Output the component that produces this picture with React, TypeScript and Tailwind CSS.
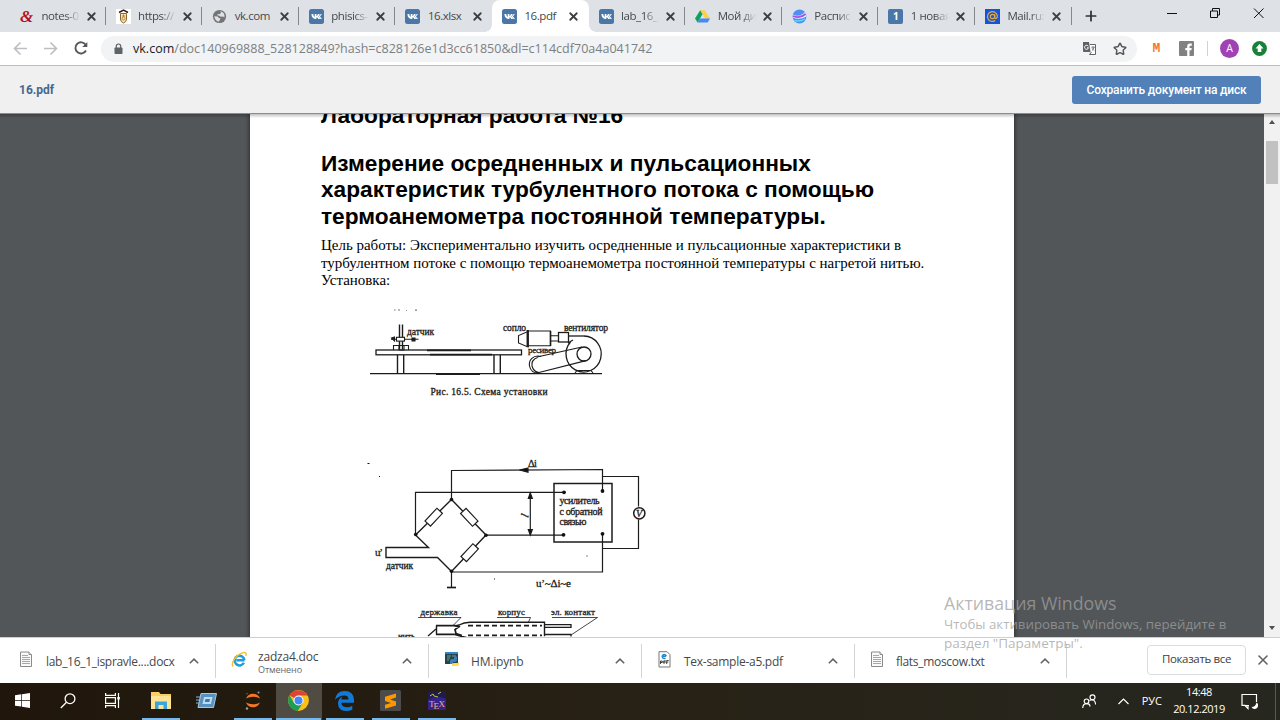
import React from "react";
import { Star, X, Plus } from "lucide-react";

function VkIcon() {
  return (
    <svg className="h-[15px] w-[15px] shrink-0" viewBox="0 0 15 15">
      <rect width="15" height="15" rx="2.5" fill="#4a76a8" />
      <path d="M2.4 4.900h1.800c.2 1.500.8 2.600 1.500 2.900V4.900h1.700v2c.7-.2 1.300-1.100 1.500-2h1.700c-.2 1.100-.9 2-1.500 2.400.7.400 1.500 1.200 1.900 2.700H9.200c-.3-.9-.9-1.600-1.800-1.700V10C4.400 10.100 2.500 8.200 2.400 4.900z" fill="#fff" />
      <path d="M9.600 7.500l2.200-2.600h1.100L11 7.400l2 2.600h-1.400z" fill="#fff" />
    </svg>
  );
}

function AmpIcon() {
  return <span className="w-[15px] shrink-0 text-center font-['Liberation_Serif',serif] text-[17px] leading-[15px] font-bold text-[#b3131f] italic">&amp;</span>;
}

function CrestIcon() {
  return (
    <svg className="h-[15px] w-[15px] shrink-0" viewBox="0 0 15 15">
      <rect width="15" height="15" fill="#fff" />
      <path d="M3 3.500L7.500 1l4.500 2.500" fill="none" stroke="#3a1a16" strokeWidth="1.500" />
      <path d="M4.500 4.500h6v5.500q0 3-3 4q-3-1-3-4z" fill="#f7e7b5" stroke="#8a6428" strokeWidth="1" />
      <path d="M6 7h3.200M7.500 5.500v2M6 9.500a1.500 1.500 0 1 0 3 0a1.500 1.500 0 1 0-3 0" fill="none" stroke="#a0742c" strokeWidth=".8" />
    </svg>
  );
}

function GlobeIcon() {
  return (
    <svg className="h-[15px] w-[15px] shrink-0" viewBox="0 0 15 15">
      <circle cx="7.500" cy="7.500" r="6.600" fill="#757575" />
      <path d="M2.300 7.200l3.400.3 1.200 1.500 1.500.2-.6 1.700-1.100 1.900Q2.800 11.500 2.300 7.200zM8 2.300l1.200 1.500-1.400 1.300-2 .2-.7 1 2.500.5 1 1 2.500-.3 1.300 1Q13.200 3.300 8 2.300z" fill="#dee1e6" />
    </svg>
  );
}

function DriveIcon() {
  return (
    <svg className="h-[15px] w-[15px] shrink-0" viewBox="0 0 15 15">
      <path d="M5.200 1.200h4.600L15 9.600h-4.800z" fill="#ffcf48" />
      <path d="M5.200 1.200L7.500 5.200 2.600 13.600 0 9.600z" fill="#11a05e" />
      <path d="M4.900 9.600H15l-2.400 4H2.600z" fill="#4688f4" />
    </svg>
  );
}

function SphereIcon() {
  return (
    <svg className="h-[15px] w-[15px] shrink-0" viewBox="0 0 15 15">
      <circle cx="7.500" cy="7.500" r="6.900" fill="#4f8df7" />
      <path d="M1 5.500Q7 9 13 3Q14.500 5.500 14.300 7.500Q7 11.500.8 8.500z" fill="#e9f3ff" />
      <path d="M1 7Q8 10 13.600 5" fill="none" stroke="#b04be0" strokeWidth="1.700" />
      <path d="M2.500 11.500Q8 13 13 9.800" fill="none" stroke="#55dbe8" strokeWidth="1.400" />
    </svg>
  );
}

function OneIcon() {
  return <span className="flex h-[15px] w-[15px] shrink-0 items-center justify-center rounded-[2px] bg-[#4a76a8] font-['Open_Sans',sans-serif] text-[10px] font-bold text-white">1</span>;
}

function MailIcon() {
  return (
    <svg className="h-[15px] w-[15px] shrink-0" viewBox="0 0 15 15">
      <rect width="15" height="15" fill="#1556d6" />
      <circle cx="7.500" cy="7.500" r="2.200" fill="none" stroke="#e5ab45" strokeWidth="1.200" />
      <path d="M9.700 5.300v3q.2 1.400 1.400 1.200 1.400-.5 1.200-2.600A4.900 4.900 0 1 0 10.200 11.600" fill="none" stroke="#e5ab45" strokeWidth="1.200" />
    </svg>
  );
}

const tabs = [
  { icon: <AmpIcon />, title: "notes-0", fade: true, line: true },
  { icon: <CrestIcon />, title: "https://", fade: true, line: true },
  { icon: <GlobeIcon />, title: "vk.com", line: true },
  { icon: <VkIcon />, title: "phisics-", fade: true, line: true },
  { icon: <VkIcon />, title: "16.xlsx" },
  { icon: <VkIcon />, title: "16.pdf", active: true },
  { icon: <VkIcon />, title: "lab_16_", fade: true, line: true },
  { icon: <DriveIcon />, title: "Мой ди", fade: true, line: true },
  { icon: <SphereIcon />, title: "Распис", fade: true, line: true },
  { icon: <OneIcon />, title: "1 новая", fade: true, line: true },
  { icon: <MailIcon />, title: "Mail.ru:", fade: true, line: true },
];

function TabStrip() {
  return (
    <div className="flex h-8 bg-[#dee1e6] pl-[9px]">
      {tabs.map((t) => (
        <div key={t.title} className={"relative flex h-8 w-[96.600px] shrink-0 items-center pl-[10px] " + (t.active ? "rounded-t-[8px] bg-white" : "")}>
          {t.active && (
            <>
              <div className="absolute bottom-0 -left-[7px] h-[7px] w-[7px] bg-[radial-gradient(circle_at_0_0,transparent_6.500px,white_7px)]" />
              <div className="absolute -right-[7px] bottom-0 h-[7px] w-[7px] bg-[radial-gradient(circle_at_100%_0,transparent_6.500px,white_7px)]" />
            </>
          )}
          {t.icon}
          <span className={"ml-[7.500px] w-[39px] shrink-0 text-[11.500px] tracking-[-0.450px] whitespace-nowrap text-[#45494d] " + (t.fade ? "[mask-image:linear-gradient(to_right,black_60%,transparent_98%)]" : "")}>{t.title}</span>
          <X className="ml-[4px] h-[13px] w-[13px] shrink-0 text-[#3c4043]" strokeWidth={3.300} />
          {t.line && <div className="absolute top-[7px] right-0 h-[18px] w-px bg-[#85888c]" />}
        </div>
      ))}
      <Plus className="mt-[8px] ml-[11px] h-4 w-4 text-[#2f3235]" strokeWidth={2.600} />
      <svg className="ml-auto h-[27px] w-[113px]" viewBox="0 0 113 27" fill="none" stroke="#111" strokeWidth="1">
        <path d="M0 13.500h10M43.500 11h7v6.500h-7zM45.500 11V8.500h7V15h-2M87 8.500l9.500 9.500M96.500 8.500L87 18" />
      </svg>
    </div>
  );
}

function Toolbar() {
  return (
    <div className="flex h-[34px] items-center border-b border-[#bcbcbc] bg-white">
      <svg className="h-[33px] w-[101px] shrink-0" viewBox="0 0 101 33" fill="none" strokeWidth="1.600">
        <path d="M27 16.500H15M20.500 10.500l-6 6 6 6M44 16.500h12M50.500 10.500l6 6-6 6" stroke="#bcbec1" />
        <path d="M85.800 13A5.600 5.600 0 1 0 86 18.500" stroke="#55585c" strokeWidth="1.900" />
        <path d="M87.300 10v5h-5z" fill="#55585c" />
      </svg>
      <div className="flex h-[26px] w-[1036px] shrink-0 items-center rounded-full bg-[#f1f3f4] pl-[13px]">
        <svg className="h-[12px] w-[9px]" viewBox="0 0 9 12">
          <rect x=".5" y="4.500" width="8" height="6.500" rx=".8" fill="#5f6368" />
          <path d="M2.300 5V3.200a2.200 2.200 0 0 1 4.400 0V5" fill="none" stroke="#5f6368" strokeWidth="1.200" />
        </svg>
        <span className="mt-[2px] ml-[10px] text-[12.500px] tracking-[0.020px] whitespace-nowrap text-[#7b8084]"><b className="font-normal text-[#202124]">vk.com</b>/doc140969888_528128849?hash=c828126e1d3cc61850&amp;dl=c114cdf70a4a041742</span>
        <svg className="mr-[16px] ml-auto h-[15px] w-[15px]" viewBox="0 0 15 15">
          <path d="M1 1h6l1.500 10H1.800Q1 11 1 10z" fill="#5f6368" />
          <path d="M8 3.500h5.500v10H7.500l2-2.500" fill="#fff" stroke="#5f6368" />
          <path d="M6.300 5.300a2 2 0 1 0 .2 1.500H5" fill="none" stroke="#fff" />
          <path d="M9.300 6.200h3.500M11 5.200v1M12 6.200q-.5 2.500-2 3.300M10 7.200l2 2.300" fill="none" stroke="#5f6368" strokeWidth=".8" />
        </svg>
        <Star className="mr-[10px] h-[14px] w-[14px] text-[#55585c]" strokeWidth={2.500} />
      </div>
      <span className="ml-[15px] w-[9px] text-center font-['Liberation_Mono',monospace] text-[13px] font-bold text-[#f4772e]">M</span>
      <svg className="ml-[18px] h-[15px] w-[15px]" viewBox="0 0 15 15">
        <rect width="15" height="15" rx="1" fill="#818181" />
        <path d="M8.200 15V9.200H6.300V7h1.900V5.300q0-2.800 2.700-2.800h1.900v2.200h-1.200q-1.100 0-1.100 1V7h2.200l-.3 2.200h-1.900V15z" fill="#fff" />
      </svg>
      <div className="ml-[13px] h-[15px] w-px bg-[#d0d2d5]" />
      <div className="ml-[12px] flex h-[19px] w-[19px] items-center justify-center rounded-full bg-[#a142b4] text-[10.500px] text-white">A</div>
      <svg className="ml-[13px] h-[15px] w-[15px]" viewBox="0 0 15 15">
        <circle cx="7.500" cy="7.500" r="7.400" fill="#188038" />
        <path d="M7.500 3l4 4.500H9.300V11H5.700V7.500H3.500z" fill="#fff" />
      </svg>
    </div>
  );
}

function SetupFigure() {
  return (
    <svg className="block h-[110px] w-[270px]" viewBox="360 300 270 110" fill="none" stroke="#1c1c1c" strokeWidth="1.100">
      <path d="M370 373.700h66M480 373.700h122" strokeWidth="1.200" />
      <path d="M436 374h44" strokeWidth="1.900" />
      <rect x="376" y="350" width="145.500" height="4.800" strokeWidth="1.300" />
      <path d="M427 350.300h44M430 354.600h62" strokeWidth="1.800" />
      <path d="M397.500 355v18.500M403.700 355v18.500M494 355v18.500M500.300 355v18.500" strokeWidth="1.400" />
      <path d="M399.500 324.500v25M402.500 324.500v25" strokeWidth="1.400" />
      <path d="M393.500 350v-4.500h15v4.500M399 345.500h5v4.500h-5z" />
      <rect x="396.500" y="337.300" width="8" height="3.800" fill="#fff" />
      <path d="M391 339.300h5.500M404.500 339.300h14" />
      <path d="M391.500 338l3-1v4zM412 338h3v3h-3z" fill="#222" />
      <path d="M518.500 335.500v7.500l9.500 4V331.500zM528 331h22.500v14.800H528" />
      <path d="M527.700 330v17" strokeWidth="2.300" />
      <path d="M550.500 331v15" strokeWidth="1.600" />
      <path d="M550.500 335.800h8M550.500 341h8" />
      <rect x="558.500" y="332.500" width="10" height="9.500" strokeWidth="1.300" />
      <path d="M568.500 336H584" strokeWidth="1.300" />
      <path d="M584 336A17.600 18 0 1 1 570.500 342L568 343l5-3" strokeWidth="1.300" />
      <circle cx="584" cy="354" r="7" strokeWidth="1.300" />
      <path d="M537 357L582 347M537 373L586 360.700" strokeWidth="1.200" />
      <path d="M541 356.500C533 354 528.500 361 529.500 366Q531 373 538 373M537.500 357.500Q531 360 532 366Q533.500 372 539 372.500" />
      <path d="M575 373l2-2.500h14l2 2.500" />
      <g fill="#202020" stroke="#202020" strokeWidth=".3" fontFamily="Liberation Serif, serif">
        <text x="407" y="335" fontSize="9.500" textLength="27">датчик</text>
        <text x="503" y="331" fontSize="9.500" textLength="23">сопло</text>
        <text x="564" y="331" fontSize="9.500" textLength="44">вентилятор</text>
        <text x="528" y="353" fontSize="9" textLength="28">ресивер</text>
        <text x="430.500" y="394.500" fontSize="9.500" textLength="117">Рис. 16.5. Схема установки</text>
        <path d="M394 309.500h1.500v1H394zM398 309.500h2v1h-2zM415 309.500h2v1.200h-2zM406 310h1v.7h-1z" fill="#777" stroke="none" />
      </g>
    </svg>
  );
}

function BridgeFigure() {
  return (
    <svg className="block h-[187px] w-[320px] shrink-0" viewBox="355 450 320 187" fill="none" stroke="#1c1c1c" strokeWidth="1.200">
      <path d="M451.500 499V470.500L602.500 469.500V491" />
      <path d="M602.500 476.500H638.500V506.500M638.500 519.500V548.500H602.500" />
      <path d="M415.500 535V492.300H563.500M486 535.200H563" />
      <path d="M415.500 535L451.500 499.500L486 535L451.500 571.500L437.500 557.500H386V547.500H428.500L415.500 535" strokeWidth="1.400" />
      <path d="M451.500 571.500V587M451.500 572H602.500V533.500" />
      <path d="M447 587.500h9" strokeWidth="1.700" />
      <path d="M530.300 493v42" />
      <path d="M519.500 470l8.500-2v4.200zM530.300 493l-2 5.500h4zM530.300 535l-2-5.500h4z" fill="#111" />
      <rect x="554" y="483.500" width="58" height="58.500" strokeWidth="1.500" />
      <g fill="#fff">
        <rect x="425" y="513.500" width="17.500" height="7.500" transform="rotate(-47 433.700 517.300)" />
        <rect x="460.500" y="513.500" width="17.500" height="7.500" transform="rotate(47 469.200 517.300)" />
        <rect x="461" y="549" width="17.500" height="7.500" transform="rotate(-47 469.700 552.800)" />
        <circle cx="639.300" cy="513.300" r="5.600" strokeWidth="1.500" />
      </g>
      <g fill="#111" stroke="none">
        <circle cx="451.500" cy="499.500" r="1.800" />
        <circle cx="415.700" cy="534.500" r="1.800" />
        <circle cx="486" cy="535.200" r="1.800" />
        <circle cx="451.500" cy="571.300" r="1.800" />
        <circle cx="564" cy="492.300" r="1.900" />
        <circle cx="602.500" cy="491" r="1.900" />
        <circle cx="563.500" cy="534.800" r="1.900" />
        <circle cx="602.500" cy="533.800" r="1.900" />
        <path d="M367.500 463h2v1h-2zM379 476h1v1h-1zM586.500 555.500h1v1h-1zM494 578.500h1v1h-1z" />
      </g>
      <path d="M418 617.500h43l-8 8M497 617.500h33.500l-2 4.500M552 617.500h45.500L571 635" strokeWidth=".8" />
      <path d="M454 625.500q2 .5 5-.5 5-2.700 11-2.700h74.500v14M436.500 625.500v9" strokeWidth="1.400" />
      <path d="M436 625.700h19l4 1.500M436 634.300h18l13 3.500M460 626l-5 3.500 1 4 6 2" strokeWidth="1.700" />
      <path d="M468 625.700h74M468 635.300h74" strokeDasharray="5 3" strokeWidth="1.700" />
      <path d="M545 624.700h26v2.600h-26M545 634.500h26v2M428 636l8-7" strokeWidth="1.300" />
      <g fill="#1c1c1c" stroke="#1c1c1c" strokeWidth=".3" fontFamily="Liberation Serif, serif">
        <text x="528" y="467" fontSize="10.500" textLength="9">Δi</text>
        <text x="559.500" y="504" fontSize="10" textLength="40">усилитель</text>
        <text x="559.500" y="514.500" fontSize="10" textLength="43">с обратной</text>
        <text x="559.500" y="525" fontSize="10" textLength="27">связью</text>
        <text x="375" y="556" fontSize="11" textLength="8">u’</text>
        <text x="386" y="569" fontSize="9.500" textLength="27">датчик</text>
        <text x="536" y="587" fontSize="11" textLength="35">u’~Δi~e</text>
        <text x="420.500" y="615" fontSize="9" textLength="37">державка</text>
        <text x="498" y="615" fontSize="9" textLength="27">корпус</text>
        <text x="551" y="615" fontSize="9" textLength="44">эл. контакт</text>
        <text x="398" y="638.500" fontSize="9" textLength="17">нить</text>
        <text x="636" y="517" fontSize="10" fontStyle="italic">V</text>
        <text x="528" y="518" fontSize="11" fontStyle="italic" transform="rotate(-75 528 518)">l</text>
      </g>
    </svg>
  );
}

function Viewer() {
  return (
    <div className="relative flex h-[524px] overflow-hidden border-t border-[#8a8c8d] bg-[#525659] pl-[250px]">
      <div className="flex h-[523px] w-[764px] shrink-0 flex-col overflow-hidden bg-white text-black shadow-[0_0_4px_1px_rgba(0,0,0,0.450)]">
        <div className="-mt-[12px] pl-[71px] font-['Liberation_Sans',sans-serif] text-[22.700px] leading-[26.200px] font-bold whitespace-nowrap">
          <p>Лабораторная работа №16</p>
          <p className="mt-[22px]">Измерение осредненных и пульсационных</p>
          <p>характеристик турбулентного потока с помощью</p>
          <p>термоанемометра постоянной температуры.</p>
        </div>
        <div className="mt-[8px] pl-[71px] font-['Liberation_Serif',serif] text-[14.970px] leading-[17.500px] whitespace-nowrap">
          <p>Цель работы: Экспериментально изучить осредненные и пульсационные характеристики в</p>
          <p className="mt-[0.500px]">турбулентном потоке с помощю термоанемометра постоянной температуры с нагретой нитью.</p>
          <p className="-mt-[0.500px]">Установка:</p>
        </div>
        <div className="mt-[11px] pl-[110px]"><SetupFigure /></div>
        <div className="mt-[40px] pl-[105px]"><BridgeFigure /></div>
      </div>
      <div className="ml-auto flex w-4 flex-col items-center bg-[#f1f1f1] pt-[6px] pb-[7px]">
        <div className="h-0 w-0 border-x-[3.500px] border-b-[4px] border-x-transparent border-b-[#505050]" />
        <div className="mt-[17px] h-[43px] w-[12px] bg-[#c1c1c1]" />
        <div className="mt-auto h-0 w-0 border-x-[3.500px] border-t-[4px] border-x-transparent border-t-[#505050]" />
      </div>
      <div className="absolute top-0 left-0 h-[4px] w-full bg-linear-to-b from-black/25 to-transparent" />
    </div>
  );
}

function DocIcon() {
  return (
    <svg className="h-[17px] w-[14px]" viewBox="0 0 14 17" fill="#fafafa" stroke="#8a8a8a">
      <path d="M1.500 1h8.500l2.500 2.500V15.500h-11z" />
      <path d="M3 4.500h6M3 6.500h8M3 8.500h8M3 10.500h8M3 12.500h8" strokeWidth=".9" stroke="#9d9d9d" />
      <path d="M10 1v2.500h2.500" />
    </svg>
  );
}

function IeIcon() {
  return (
    <svg className="h-[17px] w-[17px]" viewBox="0 0 17 17" fill="none">
      <path d="M13.600 9.200H5.300M13.400 9A4.900 4.900 0 1 0 12.900 11.800" stroke="#1f9be0" strokeWidth="2.500" />
      <path d="M2 15.500C-.5 12 5 4 11.500 1.800C15 .8 16 2.500 14.500 5" stroke="#f5c02c" strokeWidth="1.400" />
    </svg>
  );
}

function NotebookIcon() {
  return (
    <svg className="h-[15px] w-[15px]" viewBox="0 0 15 15">
      <rect width="13" height="12" fill="#27424f" />
      <path d="M0 0h13v2H0z" fill="#2e87c8" />
      <path d="M2 4h4M2 6h3M2 8h2M7 4h4" stroke="#68a888" />
      <path d="M5 12V9q0-2 2-2h2V4.500h3V8q0 2-2 2H8v2z" fill="#3e7db5" />
      <path d="M14 7v3q0 1-2 1H9q-2 0-2 1v2h5q2 0 2-2z" fill="#ffdc4a" />
    </svg>
  );
}

function PdfIcon() {
  return (
    <svg className="h-[17px] w-[13px]" viewBox="0 0 13 17">
      <path d="M1 .7h8l3 3v12.300H1z" fill="#fff" stroke="#777" />
      <path d="M8.200 5.200H4.700M8.200 5.200A2 2 0 1 0 7.500 7" fill="none" stroke="#1c8ad6" strokeWidth="1.400" />
      <path d="M2.500 13v-3h1.700v1.500H2.500M7 9v3H5.200v-1.800H7M8.700 13V9.500h2M8.700 11h1.600" fill="none" stroke="#333" strokeWidth=".9" />
    </svg>
  );
}

const downloads = [
  { icon: <DocIcon />, name: "lab_16_1_ispravle....docx", box: "w-[216px] pl-[19px]", pad: "ml-[13px] tracking-[-0.300px]" },
  { icon: <IeIcon />, name: "zadza4.doc", note: "Отменено", box: "w-[213px] pl-[15px]", pad: "ml-[10px] tracking-[-0.200px]" },
  { icon: <NotebookIcon />, name: "HM.ipynb", box: "w-[213px] pl-[16px]", pad: "ml-[11px] tracking-[-0.200px]" },
  { icon: <PdfIcon />, name: "Tex-sample-a5.pdf", box: "w-[213px] pl-[16px]", pad: "ml-[13px] tracking-[-0.270px]" },
  { icon: <DocIcon />, name: "flats_moscow.txt", box: "w-[212px] pl-[15px]", pad: "ml-[12px] tracking-[-0.300px]" },
];

function Downloads() {
  return (
    <div className="flex h-[46px] items-center border-t border-[#cfcfcf] bg-white">
      {downloads.map((d) => (
        <div key={d.name} className={"flex h-[34px] shrink-0 items-center border-r border-[#d2d4d6] " + d.box}>
          <div className="mb-[2px]">{d.icon}</div>
          <div className={"text-[12px] leading-[14px] whitespace-nowrap text-[#45484b] " + d.pad + (d.note ? " mt-[3px]" : " mt-[3px]")}>
            {d.name}
            {d.note && <div className="text-[9px] leading-[11px] tracking-[-0.100px] text-[#66696c]">{d.note}</div>}
          </div>
          <svg className="mr-[16px] ml-auto h-[6px] w-[10px]" viewBox="0 0 10 6" fill="none" stroke="#5f6368" strokeWidth="1.500">
            <path d="M.8 5.300L5 1.100l4.200 4.200" />
          </svg>
        </div>
      ))}
      <div className="ml-auto flex h-[30px] w-[99px] -translate-y-px items-center justify-center rounded-[4px] border border-[#dadce0] pb-[2px] text-[11.500px] tracking-[-0.350px] whitespace-nowrap text-[#3c4043]">Показать все</div>
      <X className="mr-[9px] ml-[9px] h-[16px] w-[16px] -translate-y-px text-[#5f6368]" strokeWidth={2.400} />
    </div>
  );
}

function TaskIcon({ run, active, narrow, children }: { run?: boolean; active?: boolean; narrow?: boolean; children: React.ReactNode }) {
  return (
    <div className={"flex h-[37px] shrink-0 flex-col items-center " + (narrow ? "w-[45px] " : "w-[46px] ") + (active ? "bg-[#504b43]" : "")}>
      <div className="flex h-[35px] items-center">{children}</div>
      {run && <div className={"h-[2px] bg-[#76b9ed] " + (active ? "w-[45px]" : "w-[38px]")} />}
    </div>
  );
}

function Taskbar() {
  return (
    <div className="flex h-[37px] bg-linear-to-r from-[#20160b] via-[#282115] to-[#262720] text-white">
      <TaskIcon narrow>
        <svg className="h-[15px] w-[15px]" viewBox="0 0 15 15" fill="#fff"><path d="M0 2.200l6.300-.9v5.800H0zM7 1.200L15 0v7.100H7zM0 7.800h6.300v5.800L0 12.700zM7 7.800h8V15l-8-1.200z" /></svg>
      </TaskIcon>
      <TaskIcon narrow>
        <svg className="h-[16px] w-[16px]" viewBox="0 0 16 16" fill="none" stroke="#fff" strokeWidth="1.300"><circle cx="10" cy="5.700" r="4.900" /><path d="M6.500 9.200L.8 15" /></svg>
      </TaskIcon>
      <TaskIcon narrow>
        <svg className="h-[15px] w-[15px]" viewBox="0 0 15 15" fill="none" stroke="#fff" strokeWidth="1.200"><path d="M.6 0v2.300h9.800V0M.6 15v-2.300h9.800V15M.6 4.600h9.800v5.700H.6zM13.500 0v15" /><path d="M12.300 4h2.500v2.500h-2.500z" fill="#fff" stroke="none" /></svg>
      </TaskIcon>
      <div className="w-[2.500px]" />
      <TaskIcon run>
        <svg className="h-[17px] w-[20px]" viewBox="0 0 20 17"><path d="M0 0h8l1.500 2H20v15H0z" fill="#f7cf62" /><path d="M0 4h20v13H0z" fill="#ffe394" /><path d="M4 17V9.500h12V17h-3.500v-4h-5v4z" fill="#3aa5db" /></svg>
      </TaskIcon>
      <TaskIcon>
        <svg className="h-[15px] w-[21px]" viewBox="0 0 21 15"><path d="M5 .5h15.500l-3 14H2z" fill="#5b92bd" stroke="#a9c9e2" /><path d="M8 4h8.500l-1.500 7H6.500z" fill="#b9dcf3" /><path d="M9.500 6h4.500l-.7 3H8.800z" fill="#3c78a8" /><path d="M0 4h4M0 7h3M0 10h3" stroke="#8fb9d8" /></svg>
      </TaskIcon>
      <TaskIcon run>
        <svg className="h-[19px] w-[16px]" viewBox="0 0 16 19"><path d="M1 7.500Q3 2.800 8 2.800T15 7.500Q12 5.700 8 5.700T1 7.500zM1 11.500Q3 16.200 8 16.200T15 11.500Q12 13.300 8 13.300T1 11.500z" fill="#f37726" /><circle cx="13.500" cy="1.500" r="1" fill="#9e9e9e" /><circle cx="2" cy="17.500" r="1.200" fill="#9e9e9e" /><circle cx="2" cy="2.700" r=".7" fill="#777" /></svg>
      </TaskIcon>
      <TaskIcon run active>
        <svg className="h-[21px] w-[21px]" viewBox="0 0 21 21"><circle cx="10.500" cy="10.500" r="10.400" fill="#fbc116" /><path d="M10.500 10.500L1.500 5.300A10.400 10.400 0 0 1 19.500 5.500H10.500z" fill="#dc4437" /><path d="M1.500 5.300A10.400 10.400 0 0 0 9.700 20.900L14.800 13 6.200 13z" fill="#1c9e57" /><circle cx="10.500" cy="10.500" r="5" fill="#fff" /><circle cx="10.500" cy="10.500" r="4" fill="#4587f3" /></svg>
      </TaskIcon>
      <TaskIcon run>
        <svg className="h-[20px] w-[19px]" viewBox="0 0 19 20"><path d="M0 9Q1 0 9.800 0T19 8.800V11.800H6.200Q6.500 16 11.500 16.200 15 16.200 17.300 14.700V18.700Q14.500 20 11 20 3.200 19.800 3 12.500 3 8 7.500 5.600 6.400 7 6.200 8.500H13.500Q13.500 4.600 9.500 4.500 3.500 4.500 0 9z" fill="#0f7ad8" /></svg>
      </TaskIcon>
      <TaskIcon run>
        <svg className="h-[21px] w-[21px]" viewBox="0 0 21 21"><rect width="21" height="21" rx="1.500" fill="#4b4b4b" /><path d="M16 3.500v4L10 9.400l6 2v4.200L5 18.800v-4l6-1.900-6-2V6.800z" fill="#ff9800" /></svg>
      </TaskIcon>
      <TaskIcon run>
        <svg className="h-[19px] w-[18px]" viewBox="0 0 18 19"><rect width="18" height="19" fill="#34218a" /><path d="M0 0h18v8Q8 3 0 9z" fill="#211b4d" /><path d="M2 5l3-2 1 2 4 1M10 3l3-2" stroke="#b5c849" fill="none" /><g fill="#f0b18c" fontFamily="Liberation Serif, serif" fontSize="9"><text x="1" y="16">T</text><text x="5.500" y="18">E</text><text x="10.500" y="16">X</text></g></svg>
      </TaskIcon>
      <div className="ml-auto flex items-center">
        <svg className="h-[15px] w-[15px]" viewBox="0 0 15 15" fill="none" stroke="#fff" strokeWidth="1.200"><circle cx="10.500" cy="3.300" r="2.500" /><circle cx="4.500" cy="7.300" r="2.300" /><path d="M.7 14Q1 9.700 4.500 9.700T8 12.500M7.500 6.500Q11 4.500 12.800 7.500 13.700 9 13.500 10.500" /></svg>
        <svg className="ml-[21px] h-[7px] w-[11px]" viewBox="0 0 11 7" fill="none" stroke="#fff" strokeWidth="1.200"><path d="M.5 6l5-5 5 5" /></svg>
        <span className="ml-[13px] text-[11px]">РУС</span>
        <div className="ml-[11px] w-[52px] -translate-y-px text-center text-[11px] leading-[16.500px] tracking-[-0.450px] whitespace-nowrap">
          <div>14:48</div>
          <div>20.12.2019</div>
        </div>
        <svg className="ml-[16px] h-[17px] w-[17px]" viewBox="0 0 17 17" fill="none" stroke="#fff" strokeWidth="1.200"><path d="M8 12.500H6l-2.500-.1H1V1.500h14.500V9M4 12.500l3 3v-3" /><path d="M15.500 9.500a3.500 3.500 0 1 1-5 4.500q4 0 5-4.500z" fill="#fff" stroke="none" /></svg>
        <div className="ml-[17px] h-[37px] w-px bg-[#5a5852]" />
        <div className="w-[4px]" />
      </div>
    </div>
  );
}

export default function App() {
  return (
    <div className="relative flex h-[720px] w-[1280px] flex-col overflow-hidden bg-white font-['Open_Sans','Noto_Sans',sans-serif]">
      <TabStrip />
      <Toolbar />
      <div className="flex h-[47px] items-center bg-[#f0f0f0] pr-[19px] pl-[19px] font-[Roboto,sans-serif]">
        <span className="text-[12px] font-bold text-[#45688e]">16.pdf</span>
        <button className="ml-auto flex h-[28px] w-[189px] items-center justify-center rounded-[3px] bg-[#5181b8] text-[12px] font-medium tracking-[-0.170px] whitespace-nowrap text-white">Сохранить документ на диск</button>
      </div>
      <Viewer />
      <Downloads />
      <Taskbar />
      <div className="pointer-events-none absolute top-[592px] left-[944px] whitespace-nowrap text-[#a0a0a0]/75">
        <div className="text-[17.750px] leading-[23px]">Активация Windows</div>
        <div className="text-[13.270px] leading-[19px]">Чтобы активировать Windows, перейдите в</div>
        <div className="text-[13.500px] leading-[19px]">раздел "Параметры".</div>
      </div>
    </div>
  );
}
